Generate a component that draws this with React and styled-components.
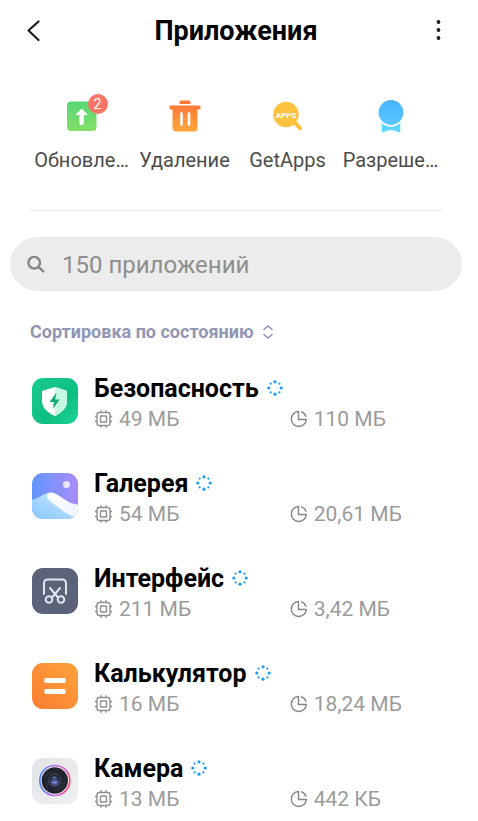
import React from "react";
import styled, { createGlobalStyle } from "styled-components";

const GlobalStyle = createGlobalStyle`
  *, *::before, *::after { box-sizing: border-box; }
  body {
    margin: 0;
    background: #fff;
    color: #000;
    font-family: Roboto, "Noto Sans", sans-serif;
  }
  button, input { font-family: inherit; }
`;

const Page = styled.main`
  display: flex;
  flex-direction: column;
  padding-right: 6px;
`;

const Header = styled.header`
  display: grid;
  grid-template-columns: 48px 1fr 48px;
  align-items: center;
  height: 62px;
  padding: 0 10px;
`;

const Title = styled.h1`
  margin: 0;
  font-size: 27px;
  line-height: 32px;
  font-weight: 700;
  text-align: center;
`;

const IconButton = styled.button`
  display: flex;
  align-items: center;
  justify-content: center;
  height: 48px;
  padding: 0;
  border: 0;
  background: none;
  color: #1c1c1c;
`;

const Actions = styled.nav`
  display: grid;
  grid-template-columns: repeat(4, 1fr);
  margin: 30px 30px 0;
  padding-bottom: 38px;
  border-bottom: 1px solid #e4e4e4;
`;

const Action = styled.button`
  display: flex;
  flex-direction: column;
  align-items: center;
  gap: 8px;
  padding: 0;
  border: 0;
  background: none;
  color: #4c4c4c;
  font-size: 20px;
  line-height: 24px;
  white-space: nowrap;
`;

const ActionIcon = styled.span`
  position: relative;
  display: block;
  width: 40px;
  height: 48px;
  padding-top: 5px;
`;

const Badge = styled.span`
  position: absolute;
  top: 2px;
  right: -6px;
  width: 20px;
  height: 20px;
  border-radius: 50%;
  background: #fb7465;
  color: #fff;
  font-size: 14px;
  line-height: 20px;
  text-align: center;
`;

const SearchBar = styled.label`
  display: flex;
  align-items: center;
  gap: 16px;
  height: 54px;
  margin: 26px 10px 0;
  padding: 0 16px;
  border-radius: 27px;
  background: #ececec;
  color: #858585;
`;

const SearchInput = styled.input`
  flex: 1;
  min-width: 0;
  padding: 2px 0 0;
  border: 0;
  outline: 0;
  background: none;
  font-size: 24px;
  line-height: 32px;
  color: #333;
  &::placeholder { color: #8e8e8e; opacity: 1; }
`;

const SortButton = styled.button`
  display: flex;
  align-items: center;
  align-self: flex-start;
  gap: 8px;
  margin: 29px 30px 0;
  padding: 0;
  border: 0;
  background: none;
  color: #9096b4;
  font-size: 18px;
  line-height: 24px;
  font-weight: 700;
`;

const AppList = styled.ul`
  display: flex;
  flex-direction: column;
  gap: 35px;
  margin: 29px 30px 0;
  padding: 0;
  list-style: none;
`;

const AppRow = styled.li`
  display: grid;
  grid-template-columns: 48px 1fr;
  column-gap: 16px;
  align-items: center;
`;

const AppIcon = styled.svg`
  display: block;
  width: 48px;
  height: 48px;
  margin-top: -4px;
`;

const AppName = styled.h2`
  display: flex;
  align-items: center;
  gap: 8px;
  margin: 0;
  font-size: 25px;
  line-height: 32px;
  font-weight: 700;
`;

const Sizes = styled.div`
  display: grid;
  grid-template-columns: 9fr 7fr;
`;

const Size = styled.span`
  display: flex;
  align-items: center;
  gap: 6px;
  color: #9b9b9b;
  font-size: 21px;
  line-height: 28px;
  white-space: nowrap;
`;

const Glyph = styled.svg`
  display: block;
  flex: none;
`;

const BackIcon = () => (
  <Glyph width="24" height="24" viewBox="0 0 24 24" fill="none" stroke="currentColor" strokeWidth="2.2" strokeLinecap="round" strokeLinejoin="round">
    <path d="M16.500 2.500 6.500 11.500l10 9.500" />
  </Glyph>
);

const MoreIcon = () => (
  <Glyph width="24" height="24" viewBox="0 0 24 24" fill="currentColor">
    <circle cx="12.500" cy="3" r="1.900" />
    <circle cx="12.500" cy="11" r="1.900" />
    <circle cx="12.500" cy="19" r="1.900" />
  </Glyph>
);

const UpdateIcon = () => (
  <Glyph width="40" height="40" viewBox="0 0 40 40">
    <defs>
      <linearGradient id="update" x1="0" y1="0" x2="0" y2="1">
        <stop offset="0" stopColor="#54d777" />
        <stop offset="1" stopColor="#86df68" />
      </linearGradient>
    </defs>
    <rect x="5" y="4.500" width="29.500" height="29.500" rx="4" fill="url(#update)" />
    <path d="M19.700 12 25 17.500H21.300V26a1.700 1.700 0 0 1-3.400 0V17.500H14.200Z" fill="#fff" stroke="#fff" strokeWidth="1" strokeLinejoin="round" />
  </Glyph>
);

const TrashIcon = () => (
  <Glyph width="40" height="40" viewBox="0 0 40 40">
    <defs>
      <linearGradient id="trash" x1="0" y1="0" x2="0" y2="1">
        <stop offset="0" stopColor="#ff7938" />
        <stop offset="1" stopColor="#ffa83d" />
      </linearGradient>
    </defs>
    <path d="M16 3.500h8q1.500 0 1.500 1.500v2h-11V5q0-1.500 1.500-1.500Z" fill="#ff7938" />
    <path d="M5.500 8.500h29q1 0 1 1v2q0 1-1 1H32.500V31q0 3.500-3.500 3.500H11Q7.500 34.500 7.500 31V12.500H5.500q-1 0-1-1v-2q0-1 1-1Z" fill="url(#trash)" />
    <path d="M16.500 16.500v11M24 16.500v11" stroke="#fff" strokeWidth="2.600" strokeLinecap="round" />
  </Glyph>
);

const GetAppsIcon = () => (
  <Glyph width="40" height="40" viewBox="0 0 40 40">
    <path d="m26 25 6 6.200" stroke="#ffbd3c" strokeWidth="4" strokeLinecap="round" />
    <circle cx="18" cy="17.500" r="12.700" fill="#ffc23e" />
    <text x="18" y="20.500" textAnchor="middle" fontSize="8" fontWeight="700" fill="#fff">APPS</text>
  </Glyph>
);

const PermissionIcon = () => (
  <Glyph width="40" height="40" viewBox="0 0 40 40">
    <defs>
      <linearGradient id="permission" x1="0" y1="0" x2="0" y2="1">
        <stop offset="0" stopColor="#48b4ff" />
        <stop offset="1" stopColor="#59c7ff" />
      </linearGradient>
    </defs>
    <path d="M11.500 26.500Q20 33 28.500 26.500q.800-.300.800.500v8q0 .800-.800.500-3.500-1.500-6-2.300h-5q-2.500.800-6 2.300-.800.300-.800-.500v-8q0-.800.800-.500Z" fill="#5cd5ff" />
    <circle cx="20" cy="15.500" r="14" fill="#fff" />
    <circle cx="20" cy="15.500" r="12.400" fill="url(#permission)" />
  </Glyph>
);

const SearchIcon = () => (
  <Glyph width="20" height="20" viewBox="0 0 20 20" fill="none" stroke="currentColor" strokeWidth="2.400">
    <circle cx="8.200" cy="8.700" r="5.800" />
    <path d="m12.500 12.800 5.500 5.300" />
  </Glyph>
);

const SortIcon = () => (
  <Glyph width="12" height="16" viewBox="0 0 12 16" fill="none" stroke="currentColor" strokeWidth="1.500">
    <path d="M1.500 6 6 2l4.500 4M1.500 10 6 14l4.500-4" />
  </Glyph>
);

const SPINNER_DOTS = [0, 1, 2, 3, 4, 5, 6, 7].map((i) => ({
  cx: 8 + 6.2 * Math.cos((i * Math.PI) / 4),
  cy: 9 + 6.2 * Math.sin((i * Math.PI) / 4),
  r: i % 2 ? 1.1 : 1.6,
}));

const Spinner = () => (
  <Glyph width="16" height="20" viewBox="0 0 16 20" fill="#1a9cf0">
    {SPINNER_DOTS.map((dot, i) => <circle key={i} {...dot} />)}
  </Glyph>
);

const ChipIcon = () => (
  <Glyph width="19" height="18" viewBox="0 0 19 18" fill="none" stroke="#8f8f8f" strokeWidth="1.400">
    <rect x="3" y="2.500" width="13" height="13" rx="2.200" />
    <rect x="6.500" y="6" width="6" height="6" rx=".5" />
    <path d="M7 .3v2.200M12 .3v2.200M7 15.500v2.200M12 15.500v2.200M1 6.500h2M1 11.500h2M16 6.500h2M16 11.500h2" />
  </Glyph>
);

const StorageIcon = () => (
  <Glyph width="18" height="18" viewBox="0 0 18 18" fill="none" stroke="#858585" strokeWidth="1.400">
    <path d="M8.500 1.500a7.500 7.500 0 1 0 7.800 8H8.500Z" />
    <path d="M11 1.700a7.500 7.500 0 0 1 5.100 5" />
  </Glyph>
);

const SecurityArt = () => (
  <>
    <linearGradient id="security" x1="0" y1="0" x2="1" y2="1">
      <stop offset="0" stopColor="#19cb92" />
      <stop offset=".6" stopColor="#0fbe81" />
      <stop offset="1" stopColor="#1ed297" />
    </linearGradient>
    <rect x="2" y="1" width="46" height="46" rx="11" fill="url(#security)" />
    <path d="M24.800 10 37 14v10c0 7-5 11.500-12.200 15C17.500 35.500 12 31 12 24V14Z" fill="#fff" />
    <path d="M24.800 10 37 14v10c0 7-5 11.500-12.200 15Z" fill="#c5fae2" />
    <path d="m26.500 15.500-7 9.500h4.300l-.800 7 6.500-9.500h-4.300Z" fill="#12ac78" />
  </>
);

const GalleryArt = () => (
  <>
    <linearGradient id="sky" x1="0" y1="0" x2="1" y2="0">
      <stop offset="0" stopColor="#6295ff" />
      <stop offset="1" stopColor="#a98cf8" />
    </linearGradient>
    <linearGradient id="backDune" x1="0" y1="1" x2="1" y2="0">
      <stop offset="0" stopColor="#83c7ff" />
      <stop offset="1" stopColor="#d9e8ff" />
    </linearGradient>
    <linearGradient id="frontDune" x1="0" y1="0" x2="1" y2="1">
      <stop offset="0" stopColor="#fff" />
      <stop offset="1" stopColor="#eef3ff" />
    </linearGradient>
    <clipPath id="galleryClip"><rect x="2" y="1" width="46" height="46" rx="11" /></clipPath>
    <g clipPath="url(#galleryClip)">
      <rect x="2" y="1" width="46" height="46" fill="url(#sky)" />
      <path d="M2 28c7-2 12-7 18-7.500 8 0 16 12 28 12V47H2Z" fill="url(#backDune)" />
      <path d="M17 24c0-3 4-4.500 8-2.500 8 4 13 10 23 11.500V45c-9-1-14-5-20-10-5-4-11-7-11-11Z" fill="url(#frontDune)" />
      <circle cx="36.500" cy="12.500" r="3.500" fill="#ebe5ff" />
    </g>
  </>
);

const InterfaceArt = () => (
  <>
    <rect x="2" y="1" width="46" height="46" rx="11" fill="#5b6279" />
    <g fill="none" stroke="#e2e6ef" strokeWidth="2" strokeLinecap="round">
      <path d="M14 27V16.500q0-4 4-4H32q4 0 4 4V27" />
      <path d="M20 21 28 30.500M30 21 22 30.500" />
      <circle cx="19" cy="32.500" r="3.300" />
      <circle cx="31" cy="32.500" r="3.300" />
    </g>
  </>
);

const CalculatorArt = () => (
  <>
    <linearGradient id="calc" x1="1" y1="0" x2="0" y2="1">
      <stop offset="0" stopColor="#ffa33b" />
      <stop offset="1" stopColor="#fb7d31" />
    </linearGradient>
    <rect x="2" y="1" width="46" height="46" rx="11" fill="url(#calc)" />
    <rect x="14.500" y="16" width="21" height="5" rx=".7" fill="#fff" />
    <rect x="14.500" y="27" width="21" height="5" rx=".7" fill="#fff" />
    <path d="M22 32 27 27h-1q-3 4-8 5Z" fill="#ffe5d2" />
  </>
);

const CameraArt = () => (
  <>
    <linearGradient id="body" x1="0" y1="0" x2="1" y2="1">
      <stop offset="0" stopColor="#e2e4e7" />
      <stop offset="1" stopColor="#eff0f1" />
    </linearGradient>
    <linearGradient id="ring" x1="0" y1=".6" x2="1" y2=".7">
      <stop offset="0" stopColor="#4b83ff" />
      <stop offset=".4" stopColor="#b168ef" />
      <stop offset=".75" stopColor="#e65bca" />
      <stop offset="1" stopColor="#ff3e60" />
    </linearGradient>
    <radialGradient id="lens" cx=".5" cy=".65" r=".6">
      <stop offset="0" stopColor="#7183c5" />
      <stop offset=".5" stopColor="#303f70" />
      <stop offset="1" stopColor="#10131f" />
    </radialGradient>
    <rect x="2" y="1" width="46" height="46" rx="11" fill="url(#body)" />
    <circle cx="24.800" cy="23.500" r="15" fill="#f2f2f6" stroke="url(#ring)" strokeWidth="1.600" />
    <circle cx="24.800" cy="23.500" r="13.200" fill="#22252f" />
    <path d="M14 20q7-7 14-3M18 33q-2-7 3-11M35 25q-3 8-11 8" fill="none" stroke="#343741" />
    <circle cx="24.800" cy="23.500" r="6" fill="url(#lens)" stroke="#555b6b" strokeWidth=".7" />
    <ellipse cx="24.500" cy="20.500" rx="2.500" ry="1" fill="#697186" />
    <path d="M21 25q4 2 7 0" fill="none" stroke="#8599df" strokeWidth=".8" />
  </>
);

const ACTIONS = [
  { label: "Обновле…", Icon: UpdateIcon, badge: 2 },
  { label: "Удаление", Icon: TrashIcon },
  { label: "GetApps", Icon: GetAppsIcon },
  { label: "Разреше…", Icon: PermissionIcon },
];

const APPS = [
  { name: "Безопасность", memory: "49 МБ", storage: "110 МБ", Art: SecurityArt },
  { name: "Галерея", memory: "54 МБ", storage: "20,61 МБ", Art: GalleryArt },
  { name: "Интерфейс", memory: "211 МБ", storage: "3,42 МБ", Art: InterfaceArt },
  { name: "Калькулятор", memory: "16 МБ", storage: "18,24 МБ", Art: CalculatorArt },
  { name: "Камера", memory: "13 МБ", storage: "442 КБ", Art: CameraArt },
];

export default function App() {
  return (
    <>
      <GlobalStyle />
      <Page>
        <Header>
          <IconButton type="button" aria-label="Назад"><BackIcon /></IconButton>
          <Title>Приложения</Title>
          <IconButton type="button" aria-label="Ещё"><MoreIcon /></IconButton>
        </Header>
        <Actions>
          {ACTIONS.map(({ label, Icon, badge }) => (
            <Action type="button" key={label}>
              <ActionIcon>
                <Icon />
                {badge && <Badge>{badge}</Badge>}
              </ActionIcon>
              {label}
            </Action>
          ))}
        </Actions>
        <SearchBar>
          <SearchIcon />
          <SearchInput type="text" aria-label="Поиск приложений" placeholder="150 приложений" />
        </SearchBar>
        <SortButton type="button">
          Сортировка по состоянию
          <SortIcon />
        </SortButton>
        <AppList>
          {APPS.map(({ name, memory, storage, Art }) => (
            <AppRow key={name}>
              <AppIcon viewBox="0 0 48 48" aria-hidden="true"><Art /></AppIcon>
              <div>
                <AppName>{name}<Spinner /></AppName>
                <Sizes>
                  <Size><ChipIcon />{memory}</Size>
                  <Size><StorageIcon />{storage}</Size>
                </Sizes>
              </div>
            </AppRow>
          ))}
        </AppList>
      </Page>
    </>
  );
}
